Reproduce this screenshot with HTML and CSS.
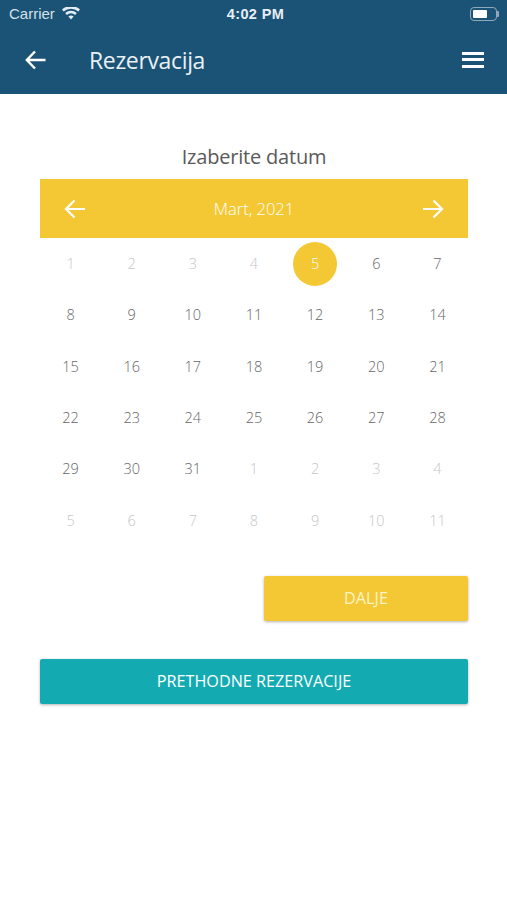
FILE: index.html
```html
<!DOCTYPE html>
<html lang="sr">
<head>
<meta charset="utf-8">
<title>Rezervacija</title>
<link rel="stylesheet" href="styles.css">
</head>
<body>
<header class="top">
  <div class="status">
    <div class="status-left">
      <span>Carrier</span>
      <svg class="wifi" viewBox="0 0 18 13" width="18" height="13"><path d="M9 12.6 6.4 9.6a3.8 3.8 0 0 1 5.2 0zM4.9 7.9 3.2 6a8.6 8.6 0 0 1 11.6 0l-1.7 1.9a6.2 6.2 0 0 0-8.2 0zM1.7 4.4 0 2.5a13.4 13.4 0 0 1 18 0l-1.7 1.9a11 11 0 0 0-14.6 0z" fill="#e4edf2"/></svg>
    </div>
    <span class="clock">4:02 PM</span>
    <div class="battery"><span class="battery-fill"></span></div>
  </div>
  <div class="appbar">
    <svg class="back" viewBox="0 0 21 20" width="21" height="20"><path d="M20.500 10H2M10 1.500 1.800 10l8.200 8.500" fill="none" stroke="#fff" stroke-width="2.400"/></svg>
    <h1>Rezervacija</h1>
    <div class="menu"><span></span><span></span><span></span></div>
  </div>
</header>
<main class="content">
  <h2>Izaberite datum</h2>
  <div class="month">
    <svg viewBox="0 0 22 20" width="22" height="20"><path d="M21 10H2M10.500 1.500 2 10l8.500 8.500" fill="none" stroke="#fff" stroke-width="2.200"/></svg>
    <span>Mart, 2021</span>
    <svg viewBox="0 0 22 20" width="22" height="20"><path d="M1 10h19M11.500 1.500 20 10l-8.500 8.500" fill="none" stroke="#fff" stroke-width="2.200"/></svg>
  </div>
  <div class="days">
    <span class="off">1</span><span class="off">2</span><span class="off">3</span><span class="off">4</span><span class="sel"><b>5</b></span><span>6</span><span>7</span>
    <span>8</span><span>9</span><span>10</span><span>11</span><span>12</span><span>13</span><span>14</span>
    <span>15</span><span>16</span><span>17</span><span>18</span><span>19</span><span>20</span><span>21</span>
    <span>22</span><span>23</span><span>24</span><span>25</span><span>26</span><span>27</span><span>28</span>
    <span>29</span><span>30</span><span>31</span><span class="off">1</span><span class="off">2</span><span class="off">3</span><span class="off">4</span>
    <span class="off">5</span><span class="off">6</span><span class="off">7</span><span class="off">8</span><span class="off">9</span><span class="off">10</span><span class="off">11</span>
  </div>
  <div class="next-row"><button class="btn yellow">DALJE</button></div>
  <button class="btn teal">PRETHODNE REZERVACIJE</button>
</main>
</body>
</html>
```
FILE: styles.css
```css
* { box-sizing: border-box; }
html, body { margin: 0; background: #fff; }
body { width: 507px; height: 900px; overflow: hidden; font-family: "Open Sans", "Noto Sans", sans-serif; }
.top { height: 94px; background: #1b5377; color: #fff; }
.status { height: 27px; padding: 0 8px 0 9px; display: flex; align-items: center; justify-content: space-between; position: relative; font-family: "Liberation Sans", sans-serif; font-size: 15px; color: #d5e0e7; }
.status-left { display: flex; align-items: center; gap: 7px; }
.clock { position: absolute; left: 0; right: 0; padding-left: 4px; text-align: center; font-weight: 700; font-size: 14.500px; letter-spacing: .4px; color: #e8eff3; }
.battery { width: 27px; height: 14px; border: 1px solid #8fa9ba; border-radius: 4px; padding: 2px; margin-right: 2px; position: relative; }
.battery::after { content: ""; position: absolute; right: -3px; top: 3px; width: 2px; height: 6px; background: #8fa9ba; border-radius: 0 1px 1px 0; }
.battery-fill { display: block; width: 14px; height: 8px; background: #fff; border-radius: 1px; }
.appbar { height: 67px; padding: 0 23px 0 25px; display: flex; align-items: center; }
.back { margin-top: -2px; }
.appbar h1 { margin: -2px 0 0 43px; flex: 1; font-size: 23px; font-weight: 400; letter-spacing: -.35px; color: #eaf0f4; }
.menu { width: 22px; display: flex; flex-direction: column; gap: 3.500px; margin-top: -2px; }
.menu span { height: 3px; background: #fff; }
.content { padding: 0 39px 0 40px; }
h2 { margin: 0; padding-top: 50px; height: 85px; line-height: 26px; text-align: center; font-size: 20px; font-weight: 400; color: #5a5a5a; letter-spacing: -.2px; }
.month { height: 59px; background: #f4c835; color: #fff; display: flex; align-items: center; justify-content: space-between; padding: 0 24px; font-size: 16.500px; font-weight: 300; }
.days { display: grid; grid-template-columns: repeat(7, 1fr); grid-auto-rows: 51.300px; font-size: 14.500px; font-weight: 300; color: #666; text-align: center; }
.days span { display: flex; align-items: center; justify-content: center; }
.days .off { color: #c6c6c6; }
.days .sel b { width: 44px; height: 44px; border-radius: 50%; background: #f4c835; color: #fff; font-weight: 300; display: flex; align-items: center; justify-content: center; }
.next-row { display: flex; justify-content: flex-end; margin: 30px 0 38px; }
.btn { display: block; height: 45px; border: 0; border-radius: 2px; color: #fff; font-family: inherit; font-size: 16.200px; box-shadow: 0 1px 3px rgba(0,0,0,.3); padding: 0; }
.yellow { width: 204px; background: #f4c835; color: #fdf3c8; }
.teal { width: 100%; background: #13abb1; }
```
